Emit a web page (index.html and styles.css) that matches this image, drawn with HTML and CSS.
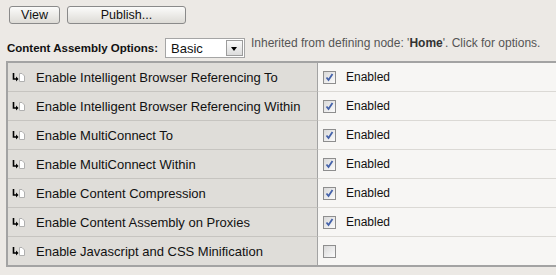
FILE: index.html
```html
<!DOCTYPE html>
<html lang="en">
<head>
    <meta charset="UTF-8">
    <title>Content Assembly Options</title>
    <link rel="stylesheet" href="styles.css">
</head>
<body>
    <div class="toolbar">
        <button type="button" class="btn btn-view">View</button>
        <button type="button" class="btn btn-publish">Publish...</button>
    </div>

    <div class="options">
        <span class="options-label">Content Assembly Options:</span>
        <div class="select">
            <span class="select-value">Basic</span>
            <span class="select-arrow"></span>
        </div>
        <span class="inherited">Inherited from defining node: '<b>Home</b>'. Click for options.</span>
    </div>

    <!-- Opciones heredadas -->
    <div class="settings">
        <div class="row">
            <div class="name"><svg class="inherit-icon" width="13" height="9" viewBox="0 0 13 9"><path d="M1.5 0V6H4.5" fill="none" stroke="#000" stroke-width="1.6"/><path d="M4 3.5L6.5 6L4 8.5Z" fill="#000"/><path d="M7.5 0.5H10L12.5 3V8.5H7.5Z" fill="#fff" stroke="#b0b0b0"/></svg>Enable Intelligent Browser Referencing To</div>
            <div class="value"><span class="check checked"></span>Enabled</div>
        </div>
        <div class="row">
            <div class="name"><svg class="inherit-icon" width="13" height="9" viewBox="0 0 13 9"><path d="M1.5 0V6H4.5" fill="none" stroke="#000" stroke-width="1.6"/><path d="M4 3.5L6.5 6L4 8.5Z" fill="#000"/><path d="M7.5 0.5H10L12.5 3V8.5H7.5Z" fill="#fff" stroke="#b0b0b0"/></svg>Enable Intelligent Browser Referencing Within</div>
            <div class="value"><span class="check checked"></span>Enabled</div>
        </div>
        <div class="row">
            <div class="name"><svg class="inherit-icon" width="13" height="9" viewBox="0 0 13 9"><path d="M1.5 0V6H4.5" fill="none" stroke="#000" stroke-width="1.6"/><path d="M4 3.5L6.5 6L4 8.5Z" fill="#000"/><path d="M7.5 0.5H10L12.5 3V8.5H7.5Z" fill="#fff" stroke="#b0b0b0"/></svg>Enable MultiConnect To</div>
            <div class="value"><span class="check checked"></span>Enabled</div>
        </div>
        <div class="row">
            <div class="name"><svg class="inherit-icon" width="13" height="9" viewBox="0 0 13 9"><path d="M1.5 0V6H4.5" fill="none" stroke="#000" stroke-width="1.6"/><path d="M4 3.5L6.5 6L4 8.5Z" fill="#000"/><path d="M7.5 0.5H10L12.5 3V8.5H7.5Z" fill="#fff" stroke="#b0b0b0"/></svg>Enable MultiConnect Within</div>
            <div class="value"><span class="check checked"></span>Enabled</div>
        </div>
        <div class="row">
            <div class="name"><svg class="inherit-icon" width="13" height="9" viewBox="0 0 13 9"><path d="M1.5 0V6H4.5" fill="none" stroke="#000" stroke-width="1.6"/><path d="M4 3.5L6.5 6L4 8.5Z" fill="#000"/><path d="M7.5 0.5H10L12.5 3V8.5H7.5Z" fill="#fff" stroke="#b0b0b0"/></svg>Enable Content Compression</div>
            <div class="value"><span class="check checked"></span>Enabled</div>
        </div>
        <div class="row">
            <div class="name"><svg class="inherit-icon" width="13" height="9" viewBox="0 0 13 9"><path d="M1.5 0V6H4.5" fill="none" stroke="#000" stroke-width="1.6"/><path d="M4 3.5L6.5 6L4 8.5Z" fill="#000"/><path d="M7.5 0.5H10L12.5 3V8.5H7.5Z" fill="#fff" stroke="#b0b0b0"/></svg>Enable Content Assembly on Proxies</div>
            <div class="value"><span class="check checked"></span>Enabled</div>
        </div>
        <div class="row">
            <div class="name"><svg class="inherit-icon" width="13" height="9" viewBox="0 0 13 9"><path d="M1.5 0V6H4.5" fill="none" stroke="#000" stroke-width="1.6"/><path d="M4 3.5L6.5 6L4 8.5Z" fill="#000"/><path d="M7.5 0.5H10L12.5 3V8.5H7.5Z" fill="#fff" stroke="#b0b0b0"/></svg>Enable Javascript and CSS Minification</div>
            <div class="value"><span class="check"></span></div>
        </div>
    </div>
</body>
</html>
```

FILE: styles.css
```css
html {
    overflow: hidden;
}
body {
    margin: 0;
    background-color: #ece9e5;
    font-family: "Liberation Sans", Arial, sans-serif;
    font-size: 12px;
    color: #111;
}
.toolbar {
    display: flex;
    gap: 7px;
    padding: 6px 0 0 9px;
}
.btn {
    height: 18px;
    padding: 0;
    font-family: inherit;
    font-size: 12.5px;
    color: #111;
    border: 1px solid #8a8a8a;
    border-radius: 3px;
    background: linear-gradient(#fbfbfa, #dddbd6);
    cursor: pointer;
}
.btn-view {
    width: 51px;
}
.btn-publish {
    width: 119px;
}
.options {
    display: flex;
    align-items: center;
    height: 20px;
    margin-top: 14px;
    padding-left: 7px;
}
.options-label {
    font-weight: bold;
    font-size: 11.5px;
    margin-right: 7px;
}
.select {
    display: flex;
    align-items: center;
    justify-content: space-between;
    box-sizing: border-box;
    width: 80px;
    height: 20px;
    border: 1px solid #a5a5a5;
    background-color: #fff;
}
.select-value {
    padding-left: 5px;
    font-size: 13px;
}
.select-arrow {
    position: relative;
    box-sizing: border-box;
    width: 17px;
    height: 16px;
    margin-right: 1px;
    border: 1px solid #9c9c9c;
    background: linear-gradient(#fafafa, #dcdcdc);
}
.select-arrow::after {
    content: "";
    position: absolute;
    left: 4px;
    top: 6px;
    border-left: 3.5px solid transparent;
    border-right: 3.5px solid transparent;
    border-top: 4px solid #000;
}
.inherited {
    align-self: flex-start;
    margin: -2px 0 0 6px;
    color: #555;
}
.inherited b {
    color: #333;
}
.settings {
    width: 548px;
    margin: 3px 0 0 6px;
    border: 2px solid #a3a3a3;
    border-right: none;
}
.row {
    display: grid;
    grid-template-columns: 310px 1fr;
}
.name,
.value {
    display: flex;
    align-items: center;
    height: 28px;
}
.name {
    padding-left: 4px;
    font-size: 13px;
    background-color: #dfddd9;
    border-right: 1px solid #a3a3a3;
    border-bottom: 1px solid #c6c4c0;
}
.value {
    padding-left: 5px;
    background-color: #f7f6f4;
    border-bottom: 1px solid #dbd9d5;
}
.row:last-child .name,
.row:last-child .value {
    border-bottom: none;
}
.inherit-icon {
    margin-right: 11px;
}
.check {
    box-sizing: border-box;
    width: 13px;
    height: 13px;
    margin-right: 10px;
    border: 1px solid #8e8e8e;
    background: linear-gradient(135deg, #d9d9d9, #fbfbfb);
}
.check.checked {
    background:
        url("data:image/svg+xml,%3Csvg xmlns='http://www.w3.org/2000/svg' width='11' height='11'%3E%3Cpath d='M2.5 5.5L4.5 8L8.5 2' fill='none' stroke='%234462aa' stroke-width='1.8'/%3E%3C/svg%3E") no-repeat center,
        linear-gradient(135deg, #d9d9d9, #fbfbfb);
}
```
